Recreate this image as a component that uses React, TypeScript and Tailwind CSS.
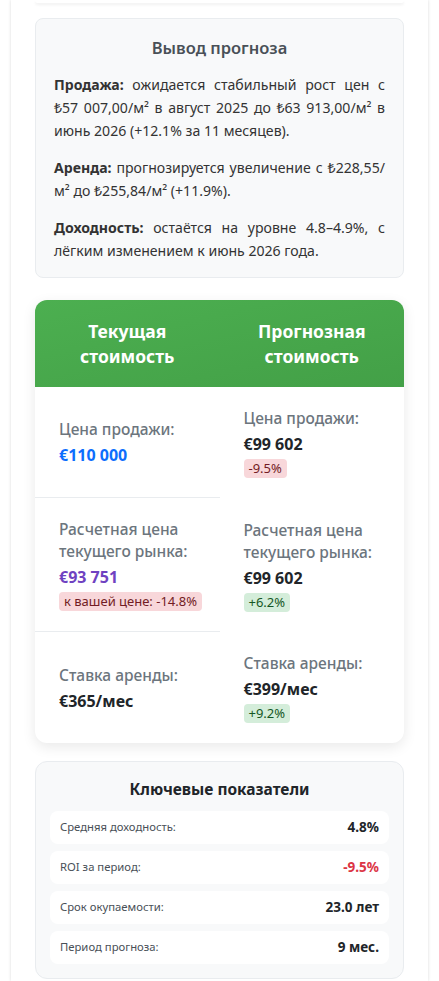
import React from "react";

const font = { fontFamily: '"Noto Sans", "Open Sans", sans-serif' };

function Badge({ tone, children }: { tone: "red" | "green"; children: React.ReactNode }) {
  const cls =
    tone === "red" ? "bg-[#f8d7da] text-[#721c24]" : "bg-[#d4edda] text-[#155724]";
  return (
    <span
      className={`inline-block self-start whitespace-nowrap rounded-[4px] px-[5px] py-[1px] text-[13px] leading-[17px] ${cls}`}
    >
      {children}
    </span>
  );
}

function Cell({
  label,
  value,
  valueClass = "text-[#212529]",
  badge,
  border = false,
}: {
  label: React.ReactNode;
  value: string;
  valueClass?: string;
  badge?: React.ReactNode;
  border?: boolean;
}) {
  return (
    <div
      className={`flex flex-col justify-center px-6 py-5 ${border ? "border-b border-[#e9ecef]" : ""}`}
    >
      <div className="mb-1 text-[15.5px] leading-[22px] font-medium text-[#6c757d]">{label}</div>
      <div className={`text-[16px] leading-[22px] font-bold ${valueClass}`}>{value}</div>
      {badge && <div className="mt-1 flex">{badge}</div>}
    </div>
  );
}

function Metric({ label, value, valueClass = "text-[#212529]" }: { label: string; value: string; valueClass?: string }) {
  return (
    <div className="flex h-[33px] items-center justify-between rounded-[8px] bg-white px-[10px]">
      <span className="text-[11.3px] text-[#495057]">{label}</span>
      <span className={`text-[13.5px] font-bold ${valueClass}`}>{value}</span>
    </div>
  );
}

export default function App() {
  return (
    <div className="min-h-screen bg-white" style={font}>
      <div className="mx-[11px] min-h-[981px] bg-white px-[24px] shadow-[0_0_3px_rgba(0,0,0,0.15)]">
        {/* tail of previous card */}
        <div className="h-[3px] rounded-b-[10px] bg-white shadow-[0_2px_3px_rgba(0,0,0,0.06)]" />

        {/* Forecast summary */}
        <div className="mt-[15px] rounded-[8px] border border-[#e9ecef] bg-[#f8f9fa] px-[18px] pt-[17px] pb-[15px]">
          <h3 className="mb-[13px] text-center text-[16.5px] leading-[24px] font-semibold text-[#495057]">
            Вывод прогноза
          </h3>
          <div className="space-y-[14px] text-justify text-[14.1px] leading-[23px] text-[#333]">
            <p>
              <b className="font-bold">Продажа:</b> ожидается стабильный рост цен с ₺57 007,00/м² в август 2025 до
              ₺63 913,00/м² в июнь 2026 (+12.1% за 11 месяцев).
            </p>
            <p>
              <b className="font-bold">Аренда:</b> прогнозируется увеличение с ₺228,55/м² до ₺255,84/м² (+11.9%).
            </p>
            <p>
              <b className="font-bold">Доходность:</b> остаётся на уровне 4.8–4.9%, с лёгким изменением к июнь 2026
              года.
            </p>
          </div>
        </div>

        {/* Comparison card */}
        <div className="mt-[22px] overflow-hidden rounded-[12px] bg-white shadow-[0_4px_14px_rgba(0,0,0,0.09)]">
          <div className="grid h-[87px] grid-cols-2 bg-gradient-to-br from-[#4caf50] to-[#43a047] text-white">
            <div className="flex items-center justify-center px-4 text-center text-[17.5px] leading-[25px] font-bold">
              Текущая
              <br />
              стоимость
            </div>
            <div className="flex items-center justify-center px-4 text-center text-[17.5px] leading-[25px] font-bold">
              Прогнозная
              <br />
              стоимость
            </div>
          </div>
          <div className="grid grid-cols-2">
            <Cell label="Цена продажи:" value="€110 000" valueClass="text-[#0d6efd]" border />
            <Cell label="Цена продажи:" value="€99 602" badge={<Badge tone="red">-9.5%</Badge>} />
            <Cell
              label={<>Расчетная цена<br />текущего рынка:</>}
              value="€93 751"
              valueClass="text-[#6f42c1]"
              badge={<Badge tone="red">к вашей цене: -14.8%</Badge>}
              border
            />
            <Cell
              label={<>Расчетная цена<br />текущего рынка:</>}
              value="€99 602"
              badge={<Badge tone="green">+6.2%</Badge>}
            />
            <Cell label="Ставка аренды:" value="€365/мес" />
            <Cell label="Ставка аренды:" value="€399/мес" badge={<Badge tone="green">+9.2%</Badge>} />
          </div>
        </div>

        {/* Key metrics */}
        <div className="mt-[18px] rounded-[12px] border border-[#e9ecef] bg-[#f8f9fa] px-[14px] pt-[16px] pb-[14px]">
          <h4 className="mb-[11px] text-center text-[15.5px] leading-[22px] font-bold text-[#212529]">
            Ключевые показатели
          </h4>
          <div className="flex flex-col gap-[7px]">
            <Metric label="Средняя доходность:" value="4.8%" />
            <Metric label="ROI за период:" value="-9.5%" valueClass="text-[#dc3545]" />
            <Metric label="Срок окупаемости:" value="23.0 лет" />
            <Metric label="Период прогноза:" value="9 мес." />
          </div>
        </div>
      </div>
    </div>
  );
}
